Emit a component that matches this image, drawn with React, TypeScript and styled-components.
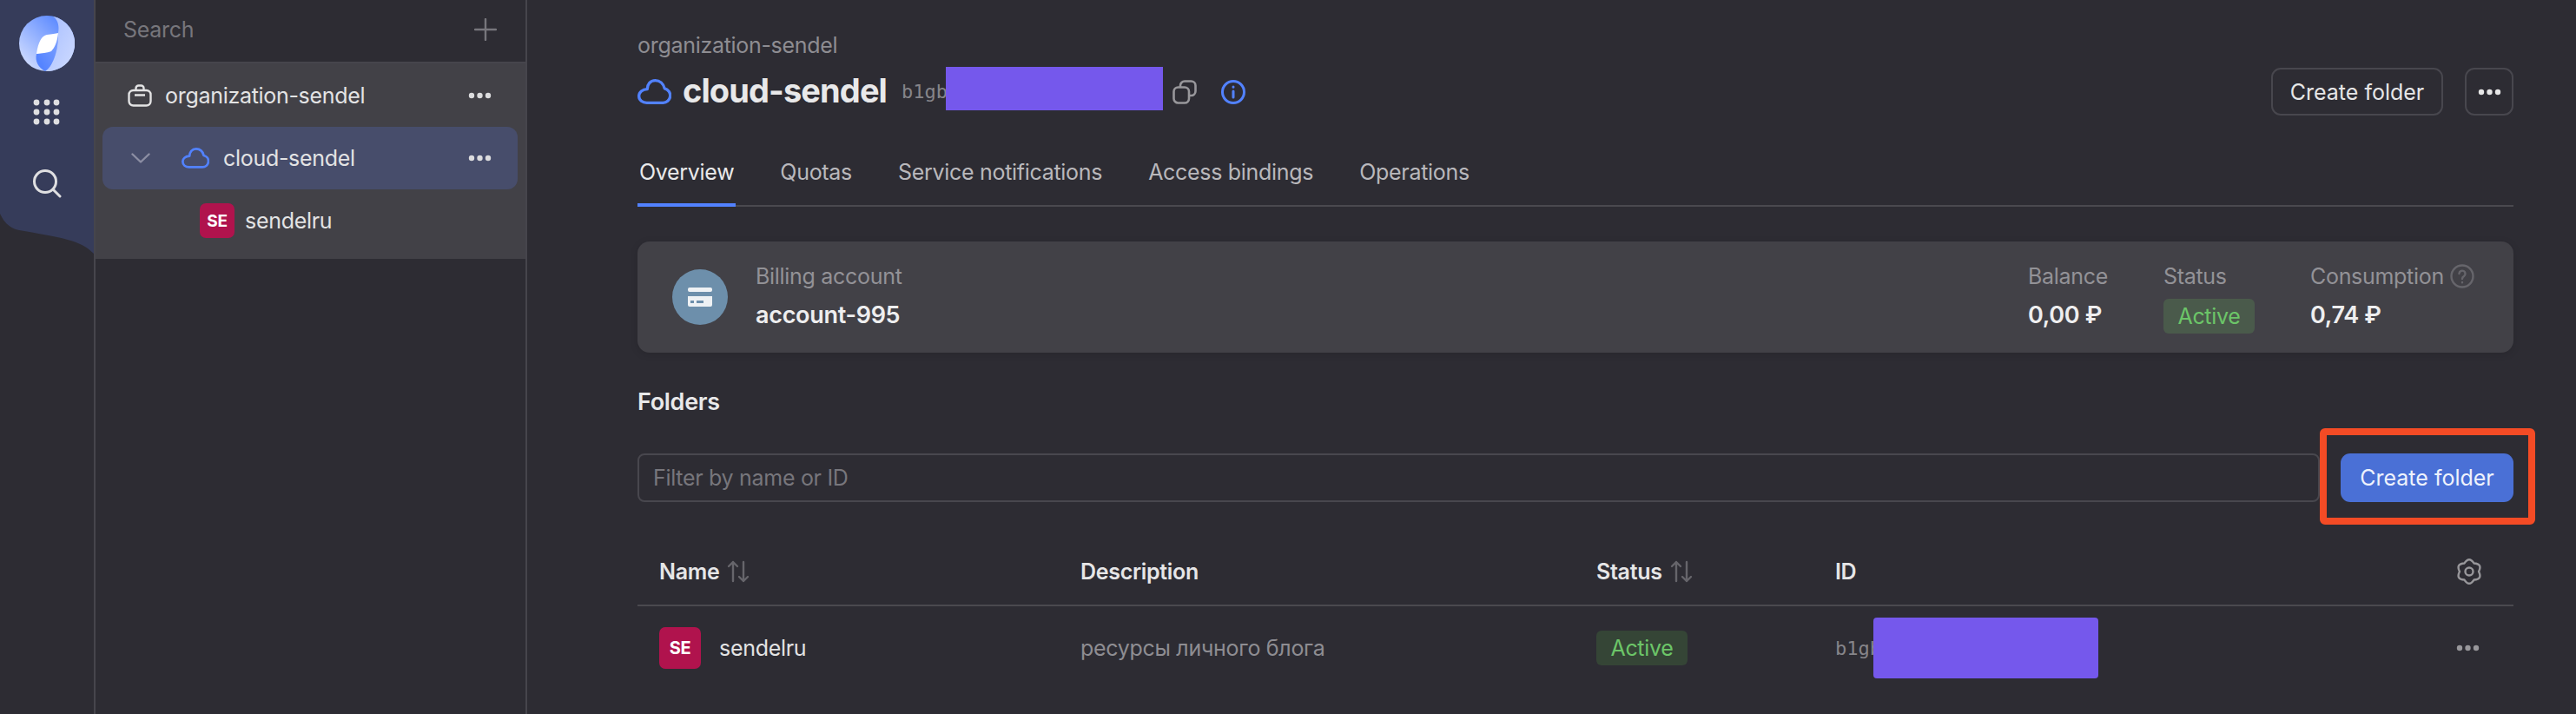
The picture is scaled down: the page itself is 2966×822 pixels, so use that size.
import styled, { createGlobalStyle } from "styled-components";

const GlobalStyle = createGlobalStyle`
    html, body {
        margin: 0;
        padding: 0;
        background: #2d2c33;
    }
    body {
        font-family: "Inter", "Noto Sans", sans-serif;
        letter-spacing: -0.3px;
        color: #e6e6e7;
    }
`;

const Page = styled.div`
    display: flex;
    width: 2966px;
    height: 822px;
    overflow: hidden;
    position: relative;
`;

const RailColumn = styled.div`
    width: 110px;
    flex: none;
    box-sizing: border-box;
    border-right: 2px solid #46454c;
`;

const Rail = styled.nav`
    height: 292px;
    background: #363c5a;
    display: flex;
    flex-direction: column;
    align-items: center;
    padding-top: 18px;
    box-sizing: border-box;
    clip-path: path("M0 0H108V292C92 276 72 274 22 265C8 262 3 252 0 246Z");
`;

const Glyph = styled.svg<{ $top?: number; $right?: number; $left?: number }>`
    display: block;
    flex: none;
    margin-top: ${(p) => p.$top ?? 0}px;
    margin-right: ${(p) => p.$right ?? 0}px;
    margin-left: ${(p) => p.$left ?? 0}px;
`;

const Sidebar = styled.aside`
    width: 497px;
    flex: none;
    box-sizing: border-box;
    border-right: 2px solid #46454c;
`;

const SearchRow = styled.div`
    height: 73px;
    box-sizing: border-box;
    border-bottom: 2px solid #46454c;
    display: flex;
    align-items: center;
    justify-content: space-between;
    padding: 0 33px 3px 32px;
    font-size: 25px;
    color: #77767c;
`;

const Tree = styled.div`
    height: 225px;
    background: #424147;
    box-sizing: border-box;
    padding-top: 1px;
`;

const TreeRow = styled.div<{ $selected?: boolean; $indent: number }>`
    height: 72px;
    margin: 0 9px 0 8px;
    border-radius: 12px;
    background: ${(p) => (p.$selected ? "#474d6b" : "transparent")};
    display: flex;
    align-items: center;
    padding-left: ${(p) => p.$indent}px;
    padding-right: 30px;
    font-size: 25px;
    color: #e3e3e4;
`;

const TreeLabel = styled.span<{ $left?: number }>`
    flex: 1;
    margin-left: ${(p) => p.$left ?? 0}px;
`;

const Avatar = styled.span<{ $size: number; $font: number }>`
    width: ${(p) => p.$size}px;
    height: ${(p) => p.$size}px;
    border-radius: 7px;
    background: #b0134d;
    color: #fff;
    font-weight: 700;
    font-size: ${(p) => p.$font}px;
    display: inline-flex;
    align-items: center;
    justify-content: center;
    flex: none;
`;

const Main = styled.main`
    flex: 1;
    box-sizing: border-box;
    padding: 0 72px 0 127px;
    display: flex;
    flex-direction: column;
`;

const Breadcrumb = styled.div`
    margin-top: 36px;
    height: 32px;
    line-height: 32px;
    font-size: 25px;
    color: #8e8d92;
`;

const TitleRow = styled.div`
    height: 55px;
    margin-top: 10px;
    display: flex;
    align-items: center;
`;

const Title = styled.h1`
    margin: 0 17px 3px 13px;
    font-size: 38px;
    font-weight: 700;
    letter-spacing: -0.9px;
    color: #e9e9ea;
`;

const MonoId = styled.span<{ $w: number }>`
    flex: none;
    width: ${(p) => p.$w}px;
    white-space: nowrap;
    font-family: "DejaVu Sans Mono", "Liberation Mono", monospace;
    font-size: 22px;
    letter-spacing: 0;
    color: #86858a;
`;

const Redacted = styled.span<{ $w: number; $h: number; $radius?: number; $lift?: number }>`
    display: block;
    flex: none;
    width: ${(p) => p.$w}px;
    height: ${(p) => p.$h}px;
    margin-top: ${(p) => -(p.$lift ?? 0)}px;
    background: #7558ec;
    border-radius: ${(p) => p.$radius ?? 0}px;
`;

const Spacer = styled.div`
    flex: 1;
`;

const OutlineButton = styled.button<{ $square?: boolean }>`
    width: ${(p) => (p.$square ? 56 : 198)}px;
    height: 55px;
    margin-left: ${(p) => (p.$square ? 25 : 0)}px;
    box-sizing: border-box;
    border: 2px solid #48474e;
    border-radius: 11px;
    background: transparent;
    color: #e6e6e7;
    font: inherit;
    font-size: 25px;
    display: flex;
    align-items: center;
    justify-content: center;
    padding: 0;
`;

const Tabs = styled.div`
    margin-top: 40px;
    height: 65px;
    box-sizing: border-box;
    border-bottom: 2px solid #4a494f;
    display: flex;
    gap: 49px;
`;

const Tab = styled.div<{ $active?: boolean }>`
    height: 65px;
    box-sizing: border-box;
    padding: 9px 2px 0;
    border-bottom: 4px solid ${(p) => (p.$active ? "#5282ff" : "transparent")};
    font-size: 25px;
    line-height: 32px;
    color: ${(p) => (p.$active ? "#e9e9ea" : "#b9b8bc")};
`;

const BillingCard = styled.section`
    margin-top: 40px;
    height: 128px;
    flex: none;
    border-radius: 14px;
    background: #424147;
    box-shadow: 0 2px 10px rgba(0, 0, 0, 0.12);
    display: flex;
    align-items: center;
    padding: 0 42px 0 40px;
`;

const CardCircle = styled.div`
    width: 64px;
    height: 64px;
    border-radius: 50%;
    background: #6d8fab;
    display: flex;
    align-items: center;
    justify-content: center;
    flex: none;
`;

const Stat = styled.div<{ $w?: number; $left?: number }>`
    width: ${(p) => (p.$w ? `${p.$w}px` : "auto")};
    margin-left: ${(p) => p.$left ?? 0}px;
    flex: none;
    align-self: flex-start;
    margin-top: 24px;
    display: flex;
    flex-direction: column;
    align-items: flex-start;
`;

const StatLabel = styled.div`
    height: 32px;
    line-height: 32px;
    font-size: 25px;
    color: #939297;
    display: flex;
    align-items: center;
    gap: 7px;
`;

const StatValue = styled.div`
    margin-top: 13px;
    height: 32px;
    line-height: 32px;
    font-size: 27px;
    font-weight: 600;
    color: #eeeeef;
`;

const Badge = styled.span<{ $dim?: boolean }>`
    display: inline-flex;
    align-items: center;
    justify-content: center;
    width: 105px;
    height: 40px;
    border-radius: 6px;
    font-size: 25px;
    color: #6cc568;
    background: ${(p) => (p.$dim ? "#354536" : "#4a5a4b")};
`;

const StatusBadgeWrap = styled.div`
    margin-top: 10px;
`;

const SectionTitle = styled.h2`
    margin: 40px 0 0;
    height: 34px;
    line-height: 34px;
    font-size: 27px;
    font-weight: 600;
    color: #e9e9ea;
`;

const FilterRow = styled.div`
    margin-top: 42px;
    display: flex;
    gap: 24px;
`;

const FilterInput = styled.div`
    flex: 1;
    height: 56px;
    box-sizing: border-box;
    border: 2px solid #48474e;
    border-radius: 8px;
    padding-left: 16px;
    display: flex;
    align-items: center;
    font-size: 25px;
    color: #77767c;
`;

const PrimaryButton = styled.button`
    width: 199px;
    height: 56px;
    border: 0;
    border-radius: 11px;
    background: #4a70d6;
    color: #eef2fc;
    font: inherit;
    font-size: 25px;
    padding: 0;
`;

const Highlight = styled.div`
    position: absolute;
    left: 2671px;
    top: 493px;
    width: 248px;
    height: 111px;
    box-sizing: border-box;
    border: 8px solid #f44b25;
    border-radius: 6px;
`;

const TableHead = styled.div`
    margin-top: 42px;
    height: 78px;
    box-sizing: border-box;
    border-bottom: 2px solid #4a494f;
`;

const Row = styled.div`
    display: grid;
    grid-template-columns: 510px 594px 275px 1fr 66px;
    align-items: center;
`;

const HeadRow = styled(Row)`
    height: 76px;
    font-size: 25px;
    font-weight: 600;
    color: #e6e6e7;
`;

const BodyRow = styled(Row)`
    height: 96px;
    font-size: 25px;
`;

const Cell = styled.div<{ $first?: boolean }>`
    display: flex;
    align-items: center;
    padding-left: ${(p) => (p.$first ? 25 : 0)}px;
    min-width: 0;
`;

const HeadLabel = styled.span`
    margin-right: 8px;
`;

const Muted = styled.span`
    color: #8e8d92;
`;

const NameText = styled.span`
    margin-left: 21px;
    color: #e3e3e4;
`;

const Dots = ({ color = "#dcdcde" }: { color?: string }) => (
    <svg width="27" height="8" viewBox="0 0 27 8" fill={color}>
        <circle cx="4" cy="4" r="3.2" />
        <circle cx="13.5" cy="4" r="3.2" />
        <circle cx="23" cy="4" r="3.2" />
    </svg>
);

const Cloud = ({ width, right = 0 }: { width: number; right?: number }) => (
    <Glyph $right={right} width={width} height={width * 0.75} viewBox="0 0 40 30" fill="none" stroke="#5282ff" strokeWidth="3.4" strokeLinejoin="round">
        <path d="M11 28h19a8.500 8.500 0 0 0 2-16.800C30.500 5 26 1.700 21 1.700 15 1.700 11.500 6.500 11.500 12 6 12 1.700 15.500 1.700 20 1.700 25 6 28 11 28z" />
    </Glyph>
);

const SortArrows = () => (
    <svg width="28" height="28" viewBox="0 0 28 28" fill="none" stroke="#66656b" strokeWidth="2.4" strokeLinecap="round" strokeLinejoin="round">
        <path d="M8 25V3M3 8l5-5 5 5" />
        <path d="M20 3v22M15 20l5 5 5-5" />
    </svg>
);

// six soft lobes round the centre, same outline as the reference gear
const gearPath = () => {
    const cx = 15;
    const cy = 15;
    const at = (deg: number, r: number) => {
        const a = (deg * Math.PI) / 180;
        return `${(cx + r * Math.cos(a)).toFixed(2)} ${(cy + r * Math.sin(a)).toFixed(2)}`;
    };
    let d = `M${at(-120, 11)}`;
    for (let i = 0; i < 6; i++) {
        const lobe = -90 + i * 60;
        d += `Q${at(lobe, 18)} ${at(lobe + 30, 11)}`;
    }
    return d + "Z";
};

function App() {
    return (
        <Page>
            <GlobalStyle />
            <RailColumn>
                <Rail>
                    <svg width="64" height="64" viewBox="0 0 64 64">
                        <defs>
                            <linearGradient id="logoA" x1="0" y1="1" x2="1" y2="0">
                                <stop offset="0.1" stopColor="#d0dcff" />
                                <stop offset="0.8" stopColor="#5f8cff" />
                            </linearGradient>
                            <linearGradient id="logoB" x1="0" y1="0" x2="1" y2="1">
                                <stop offset="0" stopColor="#a6bdff" />
                                <stop offset="1" stopColor="#cfdbff" />
                            </linearGradient>
                            <linearGradient id="logoC" x1="0" y1="1" x2="1" y2="0">
                                <stop offset="0.2" stopColor="#5584ff" />
                                <stop offset="1" stopColor="#82a4ff" />
                            </linearGradient>
                        </defs>
                        <circle cx="32" cy="32" r="32" fill="url(#logoA)" />
                        <path d="M39 0.800C46 6 46 14 45 20 45 38 42 54 30 64A32 32 0 0 0 39 0.800Z" fill="url(#logoB)" />
                        <path d="M20 44C18 52 22 60 30 64 38 60 45 42 45 20L37 41Z" fill="url(#logoC)" />
                        <path d="M20 44C22 30 26 23 32 22 38 21 42 21 45 20 44 30 41 37 37 41 32 43 26 43 20 44Z" fill="#fff" />
                    </svg>
                    <Glyph $top={31} width="32" height="32" viewBox="0 0 32 32" fill="#dfdfe1">
                        {[5, 16, 27].flatMap((y) =>
                            [4, 16, 27].map((x) => <circle key={`${x}-${y}`} cx={x} cy={y} r="3.4" />)
                        )}
                    </Glyph>
                    <Glyph $top={49} width="34" height="34" viewBox="0 0 34 34" fill="none" stroke="#dfdfe1" strokeWidth="3" strokeLinecap="round">
                        <circle cx="15" cy="15" r="12.5" />
                        <path d="M25 25l7 7" />
                    </Glyph>
                </Rail>
            </RailColumn>
            <Sidebar>
                <SearchRow>
                    Search
                    <svg width="26" height="26" viewBox="0 0 26 26" stroke="#77767c" strokeWidth="2.4" strokeLinecap="round">
                        <path d="M13 1v24M1 13h24" />
                    </svg>
                </SearchRow>
                <Tree>
                    <TreeRow $indent={29}>
                        <Glyph $right={15} width="28" height="26" viewBox="0 0 28 26" fill="none" stroke="#e3e3e4" strokeWidth="2.4" strokeLinejoin="round">
                            <rect x="1.5" y="7" width="25" height="17.5" rx="5" />
                            <path d="M8 12.5h12M9.500 7V4.500a3 3 0 0 1 3-3h3a3 3 0 0 1 3 3V7" />
                        </Glyph>
                        <TreeLabel>organization-sendel</TreeLabel>
                        <Dots />
                    </TreeRow>
                    <TreeRow $selected $indent={33}>
                        <Glyph $right={36} width="22" height="12" viewBox="0 0 22 12" fill="none" stroke="#8c8ea3" strokeWidth="2.4" strokeLinecap="round" strokeLinejoin="round">
                            <path d="M1.500 1.500L11 10.500 20.500 1.500" />
                        </Glyph>
                        <Cloud width={32} right={16} />
                        <TreeLabel>cloud-sendel</TreeLabel>
                        <Dots />
                    </TreeRow>
                    <TreeRow $indent={112}>
                        <Avatar $size={40} $font={19}>SE</Avatar>
                        <TreeLabel $left={12}>sendelru</TreeLabel>
                    </TreeRow>
                </Tree>
            </Sidebar>
            <Main>
                <Breadcrumb>organization-sendel</Breadcrumb>
                <TitleRow>
                    <Cloud width={39} />
                    <Title>cloud-sendel</Title>
                    <MonoId $w={51}>b1gb</MonoId>
                    <Redacted $w={250} $h={50} $lift={7} />
                    <Glyph $left={11} $right={28} width="28" height="28" viewBox="0 0 28 28" fill="none" stroke="#98979b" strokeWidth="2.6">
                        <rect x="1.500" y="8.500" width="17.500" height="18" rx="5" />
                        <path d="M9 8.500V6.500a5 5 0 0 1 5-5h7.500a5 5 0 0 1 5 5v6.500a5 5 0 0 1-5 5H19" />
                    </Glyph>
                    <svg width="28" height="28" viewBox="0 0 28 28" fill="none" stroke="#5282ff" strokeWidth="3" strokeLinecap="round">
                        <circle cx="14" cy="14" r="12.5" />
                        <path d="M14 13v7M14 8v.3" />
                    </svg>
                    <Spacer />
                    <OutlineButton>Create folder</OutlineButton>
                    <OutlineButton $square>
                        <Dots color="#e6e6e7" />
                    </OutlineButton>
                </TitleRow>
                <Tabs>
                    <Tab $active>Overview</Tab>
                    <Tab>Quotas</Tab>
                    <Tab>Service notifications</Tab>
                    <Tab>Access bindings</Tab>
                    <Tab>Operations</Tab>
                </Tabs>
                <BillingCard>
                    <CardCircle>
                        <svg width="28" height="22" viewBox="0 0 28 22" fill="#eef1f4">
                            <rect width="28" height="5" rx="2" />
                            <path fillRule="evenodd" d="M0 10h28v10a2 2 0 0 1-2 2H2a2 2 0 0 1-2-2zM3 15v3h4v-3zM10 15v3h8v-3z" />
                        </svg>
                    </CardCircle>
                    <Stat $left={32}>
                        <StatLabel>Billing account</StatLabel>
                        <StatValue>account-995</StatValue>
                    </Stat>
                    <Spacer />
                    <Stat $w={156}>
                        <StatLabel>Balance</StatLabel>
                        <StatValue>0,00 ₽</StatValue>
                    </Stat>
                    <Stat $w={169}>
                        <StatLabel>Status</StatLabel>
                        <StatusBadgeWrap>
                            <Badge>Active</Badge>
                        </StatusBadgeWrap>
                    </Stat>
                    <Stat $w={192}>
                        <StatLabel>
                            Consumption
                            <svg width="28" height="28" viewBox="0 0 28 28" fill="none" stroke="#66656b" strokeWidth="2.4" strokeLinecap="round">
                                <circle cx="14" cy="14" r="12.5" />
                                <path d="M10.500 11a3.500 3.500 0 1 1 5.500 3c-1.300.9-2 1.500-2 3M14 21v.3" />
                            </svg>
                        </StatLabel>
                        <StatValue>0,74 ₽</StatValue>
                    </Stat>
                </BillingCard>
                <SectionTitle>Folders</SectionTitle>
                <FilterRow>
                    <FilterInput>Filter by name or ID</FilterInput>
                    <PrimaryButton>Create folder</PrimaryButton>
                </FilterRow>
                <TableHead>
                    <HeadRow>
                        <Cell $first>
                            <HeadLabel>Name</HeadLabel>
                            <SortArrows />
                        </Cell>
                        <Cell>Description</Cell>
                        <Cell>
                            <HeadLabel>Status</HeadLabel>
                            <SortArrows />
                        </Cell>
                        <Cell>ID</Cell>
                        <Cell>
                            <svg width="30" height="30" viewBox="0 0 30 30" fill="none" stroke="#98979b" strokeWidth="2.4" strokeLinejoin="round">
                                <path d={gearPath()} />
                                <circle cx="15" cy="15" r="4.5" />
                            </svg>
                        </Cell>
                    </HeadRow>
                </TableHead>
                <BodyRow>
                    <Cell $first>
                        <Avatar $size={48} $font={20}>SE</Avatar>
                        <NameText>sendelru</NameText>
                    </Cell>
                    <Cell>
                        <Muted>ресурсы личного блога</Muted>
                    </Cell>
                    <Cell>
                        <Badge $dim>Active</Badge>
                    </Cell>
                    <Cell>
                        <MonoId $w={44}>b1gb</MonoId>
                        <Redacted $w={259} $h={70} $radius={4} />
                    </Cell>
                    <Cell>
                        <Dots color="#98979b" />
                    </Cell>
                </BodyRow>
            </Main>
            <Highlight />
        </Page>
    );
}

export default App;
